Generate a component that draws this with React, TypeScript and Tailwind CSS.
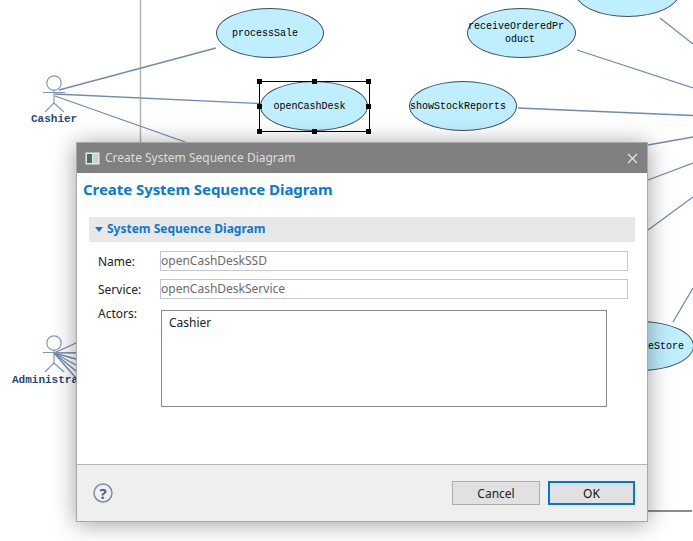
import React from 'react';

const diagramLines = [
  [59, 90, 216, 48],
  [55, 94, 260, 103.5],
  [55, 96, 188, 143],
  [577, 50, 693, 88],
  [660, 18, 693, 44],
  [518, 108, 693, 115.5],
  [648, 145, 693, 137],
  [648, 180, 693, 163],
  [648, 230, 693, 197],
  [673, 322, 693, 288],
  [54, 353, 76, 343],
  [54, 353, 76, 353],
  [54, 353, 76, 359],
  [54, 353, 76, 365],
  [54, 353, 76, 371],
  [54, 353, 76, 378],
];

const Ellipse = ({ className, children }: { className: string; children?: React.ReactNode }) => (
  <div
    className={`absolute flex items-center justify-center rounded-[50%] border border-[#3d4f57] bg-[#bfeeff] text-center font-['Liberation_Mono',monospace] text-[10px] leading-[13px] text-black ${className}`}
  >
    {children}
  </div>
);

const Actor = ({ x, y, armRight }: { x: number; y: number; armRight: number }) => (
  <g stroke="#7f9ab8" strokeWidth="1.2" fill="none">
    <circle cx={x} cy={y} r="7.2" />
    <path d={`M${x - 11} ${y + 9.5}H${armRight}M${x} ${y + 7}V${y + 20}L${x - 9} ${y + 29}M${x} ${y + 20}L${x + 10} ${y + 29}`} />
  </g>
);

const Handle = ({ className }: { className: string }) => (
  <div className={`absolute size-[5px] bg-black ${className}`} />
);

const FormRow = ({ label, value }: { label: string; value: string }) => (
  <div className="flex h-[20px] items-center">
    <span className="w-[62px] pt-px text-[#222]">{label}</span>
    <div className="flex h-[20px] w-[468px] items-center border border-[#c4c9cf] pl-0 text-[#6b6b6b]">{value}</div>
  </div>
);

export default function App() {
  return (
    <div className="relative h-[541px] w-[693px] overflow-hidden bg-white font-['Noto_Sans',sans-serif]">
      {/* Diagram behind the dialog */}
      <svg className="absolute inset-0" width="693" height="541">
        <path d="M140.5 0V143" stroke="#b4b4b4" strokeWidth="1.5" />
        <path d="M648 511H692" stroke="#8c8c8c" strokeWidth="2" />
        {diagramLines.map(([x1, y1, x2, y2], i) => (
          <line key={i} x1={x1} y1={y1} x2={x2} y2={y2} stroke="#6f8cae" strokeWidth="1.3" />
        ))}
        <Actor x={54} y={83} armRight={65} />
        <Actor x={54} y={343} armRight={76} />
      </svg>

      <Ellipse className="left-[575px] top-[-33px] h-[50px] w-[105px]" />
      <Ellipse className="left-[216px] top-[8px] h-[50px] w-[108px] pr-[10px]">processSale</Ellipse>
      <Ellipse className="left-[467px] top-[8px] h-[50px] w-[109px] justify-start">
        <span className="w-[96px]">
          <span className="block">receiveOrderedPr</span>
          <span className="block pl-[8px]">oduct</span>
        </span>
      </Ellipse>
      <Ellipse className="left-[260px] top-[81px] h-[50px] w-[108px] pr-[9px]">openCashDesk</Ellipse>
      <Ellipse className="left-[409px] top-[81px] h-[50px] w-[108px] justify-start">showStockReports</Ellipse>
      <Ellipse className="left-[586px] top-[321px] h-[50px] w-[108px] justify-end pr-[9px]">manageStore</Ellipse>

      {/* Selection box */}
      <div className="absolute left-[259px] top-[81px] h-[51px] w-[111px] border border-black">
        <Handle className="left-[-3px] top-[-3px]" />
        <Handle className="left-[52px] top-[-3px]" />
        <Handle className="left-[106px] top-[-3px]" />
        <Handle className="left-[-3px] top-[22px]" />
        <Handle className="left-[106px] top-[22px]" />
        <Handle className="left-[-3px] top-[47px]" />
        <Handle className="left-[52px] top-[47px]" />
        <Handle className="left-[106px] top-[47px]" />
      </div>

      <div className="absolute left-[31px] top-[112px] font-['Liberation_Mono',monospace] text-[11px] font-bold leading-[14px] text-[#1d4a78]">Cashier</div>
      <div className="absolute left-[12px] top-[373px] font-['Liberation_Mono',monospace] text-[11px] font-bold leading-[14px] text-[#1d4a78]">Administrator</div>

      {/* Dialog */}
      <div className="absolute left-[76px] top-[142px] flex h-[380px] w-[572px] flex-col border border-[#a8a8a8] bg-white text-[12px] shadow-[0_2px_22px_rgba(0,0,0,0.38)]">
        <div className="flex h-[30px] shrink-0 items-center bg-[#808080] pl-[8px] pr-[9px] text-[#dedede]">
          <svg width="15" height="13" viewBox="0 0 15 13" className="mr-[5px] shrink-0">
            <rect x="0.5" y="0.5" width="14" height="12" fill="#e6e6e6" />
            <rect x="2" y="2" width="5" height="9" fill="#3f6f6c" />
            <rect x="8" y="2" width="5" height="9" fill="#c9d2d6" />
          </svg>
          <span className="flex-1">Create System Sequence Diagram</span>
          <svg width="11" height="11" viewBox="0 0 11 11" stroke="#e4e4e4" strokeWidth="1.2">
            <path d="M1 1L10 10M10 1L1 10" />
          </svg>
        </div>

        <div className="flex min-h-0 flex-1 flex-col border-b border-[#b4b4b4]">
          <h1 className="pl-[6px] pt-[6px] text-[15px] font-bold leading-[20px] tracking-[-0.06px] text-[#0a78d7]">Create System Sequence Diagram</h1>

          <div className="ml-[12px] mt-[18px] flex h-[25px] w-[546px] items-center bg-[#e8e8e8] pl-[6px]">
            <svg width="8" height="5" viewBox="0 0 8 5" className="mr-[4px]">
              <path d="M0 0H8L4 5Z" fill="#0a78d7" />
            </svg>
            <span className="pb-[2px] font-bold text-[#0a78d7]">System Sequence Diagram</span>
          </div>

          <div className="ml-[21px] mt-[9px] flex flex-col gap-[8px]">
            <FormRow label="Name:" value="openCashDeskSSD" />
            <FormRow label="Service:" value="openCashDeskService" />
            <div className="flex">
              <span className="-mt-[2px] w-[63px] text-[#222]">Actors:</span>
              <div className="mt-[3px] h-[97px] w-[446px] border border-[#8a8a8a] pl-[7px] pt-[3px] text-[#222]">Cashier</div>
            </div>
          </div>
        </div>

        <div className="flex h-[56px] shrink-0 items-center justify-between bg-[#efefef] pl-[16px] pr-[12px]">
          <svg width="20" height="20" viewBox="0 0 20 20" fill="none">
            <circle cx="10" cy="10" r="9" stroke="#7d8ca8" strokeWidth="1.5" />
            <text x="10" y="15.5" textAnchor="middle" fontSize="15" fontWeight="700" fontFamily="Noto Sans" fill="#4f5f80">?</text>
          </svg>
          <div className="flex gap-[8px]">
            <button className="h-[24px] w-[88px] border border-[#adadad] bg-[#e1e1e1] pt-px text-[#222]">Cancel</button>
            <button className="h-[24px] w-[87px] border-2 border-[#0078d7] bg-[#e1e1e1] pt-px text-[#111]">OK</button>
          </div>
        </div>
      </div>
    </div>
  );
}
